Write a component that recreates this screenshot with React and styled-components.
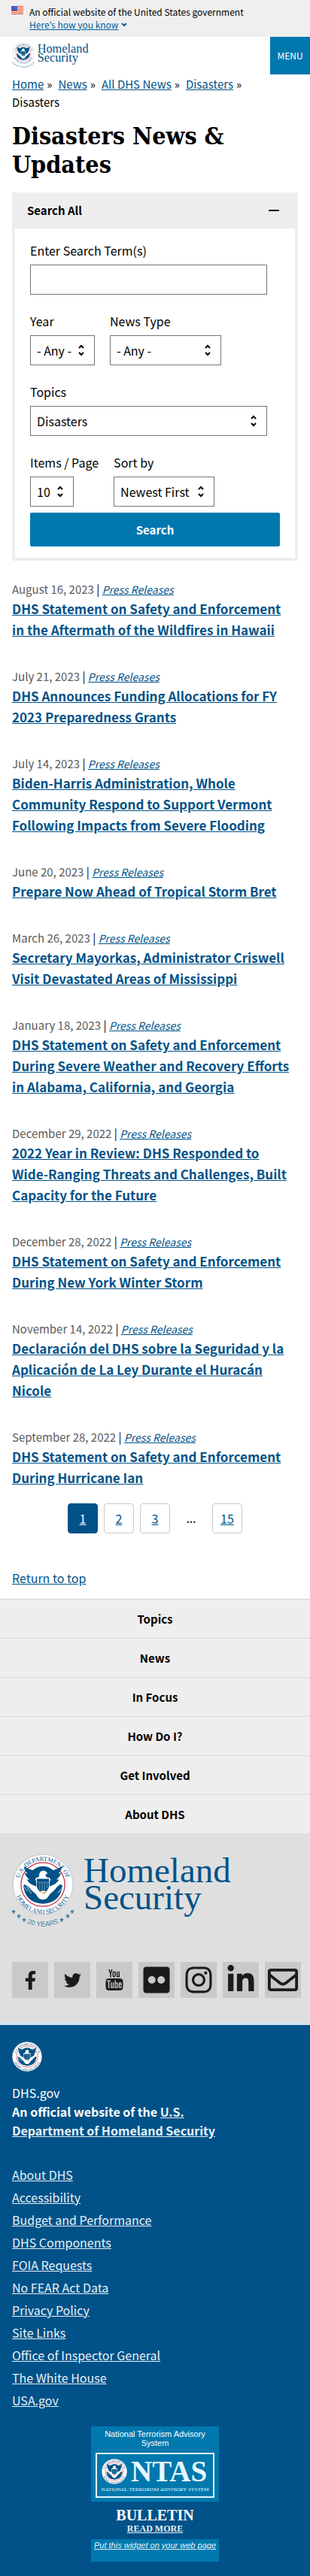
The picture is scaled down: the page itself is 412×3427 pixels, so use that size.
import React, { useId } from "react";
import styled, { createGlobalStyle } from "styled-components";
import {
  FaFacebookF,
  FaTwitter,
  FaFlickr,
  FaInstagram,
  FaLinkedinIn,
  FaRegEnvelope,
} from "react-icons/fa";
import { TfiYoutube } from "react-icons/tfi";

const sans = `"Noto Sans CJK KR", "Noto Sans", sans-serif`;
const serif = `"Liberation Serif", serif`;
const color = {
  blue: "#0078ae",
  navy: "#005288",
  link: "#005288",
  ink: "#000",
  muted: "#5a5b5d",
  pale: "#eee",
};

const GlobalStyle = createGlobalStyle`
  *, *::before, *::after { box-sizing: border-box; }
  body {
    margin: 0;
    background: #fff;
    color: ${color.ink};
    font-family: ${sans};
    font-size: 16px;
    line-height: 24px;
  }
  a { color: ${color.link}; }
  h1, h2, p, ul, ol { margin: 0; padding: 0; }
  ul, ol { list-style: none; }
  button, input, select { font: inherit; color: inherit; }
  svg { display: block; overflow: visible; }
`;

/* ---------- drawings ---------- */

function SealArt() {
  const id = useId();
  return (
    <g>
      <circle r="99" fill="#c9ccd4" />
      <circle r="96" fill="#fff" />
      <circle r="71" fill="#fff" stroke="#c8283c" strokeWidth="3" />
      <path d="M-63 4 Q-58 -4 -46 8 Q-36 22 -24 30 L-14 44 Q0 54 14 44 L24 30 Q38 20 46 8 Q58 -6 63 4 Q58 58 0 63 Q-58 58 -63 4Z" fill={color.navy} />
      <path d="M-36 -42 Q-24 -58 0 -59 Q24 -58 36 -42 L30 -22 L-30 -22Z" fill={color.navy} />
      <path d="M-62 -60 Q-44 -48 -30 -46 L-22 -20 L-22 6 Q-46 -2 -52 -16 L-44 -16 Q-56 -26 -59 -38 L-50 -35 Q-60 -46 -62 -60Z" fill={color.navy} />
      <path d="M62 -60 Q44 -48 30 -46 L22 -20 L22 6 Q46 -2 52 -16 L44 -16 Q56 -26 59 -38 L50 -35 Q60 -46 62 -60Z" fill={color.navy} />
      <path d="M-12 -26 Q-14 -44 2 -45 Q12 -44 15 -34 L8 -33 Q9 -28 12 -24 L24 -19 L24 -12 L-24 -12 L-24 -19Z" fill="#fff" />
      <path d="M-20 -18 H20 V6 Q16 22 0 28 Q-16 22 -20 6Z" fill={color.navy} />
      <path d="M-20 -7 H20 M-10 -5 V18 M-2 -5 V24 M6 -5 V22 M14 -5 V12" stroke="#7fa8c8" strokeWidth="2" fill="none" />
      <path d="M-60 8 L-50 22 M-54 2 L-38 30 M48 28 L60 14" stroke="#8fb5d0" strokeWidth="3" />
      <path d="M-26 14 L-12 24 L0 20 L14 24 L28 12 L20 30 L8 32 L14 44 Q0 54 -14 44 L-8 32 L-20 28Z" fill="#fff" />
      <path d="M-18 20 L0 26 L16 20 L4 32Z" fill="#d8b66a" />
      <path id={`${id}t`} d="M-77 20 A79 79 0 1 1 77 20" fill="none" />
      <path id={`${id}b`} d="M-91 -10 A92 92 0 1 0 91 -10" fill="none" />
      <g fill={color.navy} fontFamily="Liberation Serif, serif" fontSize="20" textAnchor="middle">
        <text><textPath href={`#${id}t`} startOffset="50%">U.S. DEPARTMENT OF</textPath></text>
        <text><textPath href={`#${id}b`} startOffset="50%">HOMELAND SECURITY</textPath></text>
      </g>
    </g>
  );
}

function Seal({ size }) {
  return (
    <svg width={size} height={size} viewBox="-100 -100 200 200" role="img" aria-label="Seal">
      <SealArt />
    </svg>
  );
}

const star = "M0 -3 L1 -1 L3 -1 L1 1 L2 3 L0 2 L-2 3 L-1 1 L-3 -1 L-1 -1Z";
const stars = [[2, 76], [9, 82], [16, 87], [80, 76], [74, 82], [66, 87]];

function Logo({ width, height }) {
  const id = useId();
  return (
    <svg width={width} height={height} viewBox="0 0 290 98" role="img" aria-label="Homeland Security">
      <g transform="translate(41 40) scale(.41)"><SealArt /></g>
      {stars.map(([x, y]) => (
        <path key={`${x}-${y}`} d={star} transform={`translate(${x} ${y})`} fill="#3f7f9f" />
      ))}
      <path id={id} d="M-12 52 A54 54 0 0 0 94 52" fill="none" />
      <text fontFamily="Liberation Sans, sans-serif" fontSize="9" fill="#3f7f9f" textAnchor="middle">
        <textPath href={`#${id}`} startOffset="50%">20 YEARS</textPath>
      </text>
      <g fontFamily="Liberation Serif, serif" fontSize="47" fill={color.navy}>
        <text x="95" y="37">Homeland</text>
        <text x="95" y="73">Security</text>
      </g>
    </svg>
  );
}

function Flag() {
  return (
    <svg width="16" height="11" viewBox="0 0 16 11" role="img" aria-label="U.S. flag">
      <rect width="16" height="11" fill="#fff" />
      {[0, 2, 4, 6, 8, 10].map((y) => (
        <rect key={y} y={y} width="16" height="1" fill="#db3e1f" />
      ))}
      <rect width="8" height="6" fill="#1e33b1" />
      {[1, 3, 5].map((y) => [1, 3, 5, 7].map((x) => (
        <rect key={`${x}${y}`} x={x - 0.5} y={y - 0.5} width="1" height="1" fill="#cfd6f5" />
      )))}
    </svg>
  );
}

/* ---------- banner and header ---------- */

const Banner = styled.section`
  display: flex;
  gap: 8px;
  padding: 8px 15px;
  background: #efefef;
  font-size: 12px;
  line-height: 16px;
`;
const BannerText = styled.div`
  display: flex;
  flex-direction: column;
  align-items: flex-start;
`;
const BannerToggle = styled.button`
  display: flex;
  align-items: center;
  gap: 4px;
  padding: 0;
  border: 0;
  background: none;
  color: #005ea2;
  line-height: 17px;
  span { text-decoration: underline; }
`;
const Header = styled.header`
  display: flex;
  justify-content: space-between;
  align-items: stretch;
  height: 50px;
  padding-left: 16px;
`;
const LogoLink = styled.a`
  padding-top: 8px;
`;
const MenuButton = styled.button`
  width: 53px;
  border: 0;
  padding: 0;
  background: ${color.blue};
  color: #fff;
  font-size: 12px;
`;

const Crumbs = styled.ol`
  display: flex;
  flex-wrap: wrap;
  padding: 1px 32px 0 16px;
  font-size: 15px;
  li:not(:last-child)::after {
    content: "»";
    margin: 0 8px 0 4px;
  }
`;
const Title = styled.h1`
  padding: 14px 16px 18px;
  font-family: "DejaVu Serif Condensed", "DejaVu Serif", serif;
  font-stretch: condensed;
  font-size: 32px;
  line-height: 38px;
  font-weight: 700;
`;

/* ---------- search panel ---------- */

const Panel = styled.section`
  margin: 0 16px 26px;
`;
const PanelToggle = styled.button`
  display: flex;
  justify-content: space-between;
  align-items: center;
  width: 100%;
  height: 48px;
  padding: 0 25px 0 20px;
  border: 0;
  background: ${color.pale};
  font-size: 15px;
  font-weight: 700;
`;
const Minus = styled.span`
  width: 14px;
  height: 2px;
  background: #000;
`;
const Form = styled.form`
  display: flex;
  flex-direction: column;
  gap: 23px;
  padding: 17px 20px 15px;
  border: 4px solid ${color.pale};
  border-top: 0;
`;
const FieldRow = styled.div`
  display: flex;
  gap: 20px;
`;
const Field = styled.div`
  display: flex;
  flex-direction: column;
  align-items: flex-start;
  gap: 7px;
  width: ${(p) => p.$width || "auto"};
`;
const Label = styled.label`
  white-space: nowrap;
`;
const TextInput = styled.input`
  width: 100%;
  height: 40px;
  padding: 0 8px;
  border: 1px solid #71767a;
`;
const SelectWrap = styled.div`
  position: relative;
  width: ${(p) => p.$width};
  svg {
    position: absolute;
    right: 14px;
    top: 12px;
    pointer-events: none;
  }
`;
const SelectBox = styled.select`
  appearance: none;
  width: 100%;
  height: 40px;
  padding: 0 8px;
  border: 1px solid #71767a;
  border-radius: 0;
  background: #fff;
`;
const Actions = styled.div`
  margin-top: -15px;
  display: flex;
`;
const SearchButton = styled.button`
  flex: 1;
  height: 45px;
  border: 0;
  border-radius: 2px;
  background: ${color.blue};
  color: #fff;
  font-size: 15px;
  font-weight: 700;
`;

function Select({ id, label, width, options, fieldWidth }) {
  return (
    <Field $width={fieldWidth}>
      <Label htmlFor={id}>{label}</Label>
      <SelectWrap $width={width}>
        <SelectBox id={id}>
          {options.map((o) => <option key={o}>{o}</option>)}
        </SelectBox>
        <svg width="8" height="16" viewBox="0 0 8 16" fill="none" stroke="#000" strokeWidth="2">
          <path d="M1 5 L4 2 L7 5 M1 11 L4 14 L7 11" />
        </svg>
      </SelectWrap>
    </Field>
  );
}

/* ---------- news list ---------- */

const NewsList = styled.ul`
  display: flex;
  flex-direction: column;
  gap: 36px;
  padding: 0 24px 0 16px;
`;
const Meta = styled.p`
  font-size: 15px;
  line-height: 24px;
  time { color: ${color.muted}; }
  a { font-size: 14px; font-style: italic; }
`;
const Headline = styled.h2`
  font-size: 17px;
  line-height: 28px;
  font-weight: 700;
`;

const news = [
  ["August 16, 2023", "DHS Statement on Safety and Enforcement in the Aftermath of the Wildfires in Hawaii"],
  ["July 21, 2023", "DHS Announces Funding Allocations for FY 2023 Preparedness Grants"],
  ["July 14, 2023", "Biden-Harris Administration, Whole Community Respond to Support Vermont Following Impacts from Severe Flooding"],
  ["June 20, 2023", "Prepare Now Ahead of Tropical Storm Bret"],
  ["March 26, 2023", "Secretary Mayorkas, Administrator Criswell Visit Devastated Areas of Mississippi"],
  ["January 18, 2023", "DHS Statement on Safety and Enforcement During Severe Weather and Recovery Efforts in Alabama, California, and Georgia"],
  ["December 29, 2022", "2022 Year in Review: DHS Responded to Wide-Ranging Threats and Challenges, Built Capacity for the Future"],
  ["December 28, 2022", "DHS Statement on Safety and Enforcement During New York Winter Storm"],
  ["November 14, 2022", "Declaración del DHS sobre la Seguridad y la Aplicación de La Ley Durante el Huracán Nicole"],
  ["September 28, 2022", "DHS Statement on Safety and Enforcement During Hurricane Ian"],
];

const Pager = styled.nav`
  display: flex;
  justify-content: center;
  gap: 8px;
  padding: 20px 16px 47px;
`;
const PageLink = styled.a`
  display: flex;
  align-items: center;
  justify-content: center;
  width: 40px;
  height: 40px;
  border: 1px solid ${(p) => (p.$current ? color.navy : "#c6cace")};
  border-radius: 4px;
  background: ${(p) => (p.$current ? color.navy : "#fff")};
  color: ${(p) => (p.$current ? "#fff" : color.link)};
`;
const PageGap = styled.span`
  width: 40px;
  font-family: "Noto Sans", sans-serif;
  line-height: 40px;
  text-align: center;
`;
const ReturnTop = styled.p`
  padding: 0 16px 16px;
`;

/* ---------- footer ---------- */

const FooterNav = styled.nav`
  background: ${color.pale};
`;
const FooterNavLink = styled.a`
  display: block;
  height: 52px;
  border-top: 1px solid #d8d8d8;
  color: #000;
  font-size: 15px;
  font-weight: 700;
  line-height: 51px;
  text-align: center;
  text-decoration: none;
`;
const Brand = styled.section`
  padding: 28px 12px 32px 16px;
  background: #dfdfdf;
  border-bottom: 4px solid #d5e5f0;
`;
const Social = styled.ul`
  display: flex;
  flex-wrap: wrap;
  gap: 8px;
  padding-top: 45px;
`;
const SocialLink = styled.a`
  display: flex;
  align-items: center;
  justify-content: center;
  width: 48px;
  height: 48px;
  background: #c9c9c9;
  color: #1b1b1b;
`;
const Identifier = styled.footer`
  padding: 22px 16px 19px;
  background: ${color.navy};
  color: #fff;
  a { color: #e6f1f8; }
`;
const Domain = styled.p`
  padding-top: 16px;
  line-height: 25px;
`;
const Official = styled.p`
  max-width: 290px;
  font-weight: 700;
  line-height: 25px;
`;
const Required = styled.ul`
  padding: 31px 0 20px;
  line-height: 30px;
`;

const Widget = styled.aside`
  width: 170px;
  margin: 0 auto;
  font-family: "Liberation Sans", sans-serif;
  font-size: 11px;
  line-height: 12px;
  text-align: center;
`;
const WidgetTop = styled.div`
  padding: 4px 6px 5px;
  background: ${color.blue};
`;
const NtasBox = styled.div`
  margin-top: 7px;
  border: 2px solid #e6f6ff;
`;
const Bulletin = styled.div`
  display: flex;
  flex-direction: column;
  align-items: center;
  padding-top: 6px;
  height: 50px;
  font-family: ${serif};
  font-weight: 700;
  strong { font-size: 20px; line-height: 24px; }
  a { font-size: 12px; line-height: 12px; }
`;
const WidgetBottom = styled.div`
  height: 30px;
  padding-top: 2px;
  background: ${color.blue};
  font-style: italic;
  white-space: nowrap;
`;

const socials = [
  ["Facebook", <FaFacebookF size={25} />],
  ["Twitter", <FaTwitter size={23} />],
  ["YouTube", <TfiYoutube size={28} />],
  ["Flickr", <FaFlickr size={40} />],
  ["Instagram", <FaInstagram size={40} />],
  ["LinkedIn", <FaLinkedinIn size={40} />],
  ["Email", <FaRegEnvelope size={40} />],
];

const requiredLinks = [
  "About DHS", "Accessibility", "Budget and Performance", "DHS Components",
  "FOIA Requests", "No FEAR Act Data", "Privacy Policy", "Site Links",
  "Office of Inspector General", "The White House", "USA.gov",
];

export default function App() {
  return (
    <>
      <GlobalStyle />
      <Banner>
        <Flag />
        <BannerText>
          <span>An official website of the United States government</span>
          <BannerToggle type="button">
            <span>Here’s how you know</span>
            <svg width="8" height="6" viewBox="0 0 8 6" fill="none" stroke="#005ea2" strokeWidth="2">
              <path d="M1 1 L4 4 L7 1" />
            </svg>
          </BannerToggle>
        </BannerText>
      </Banner>
      <Header>
        <LogoLink href="#home" aria-label="Home"><Logo width="102" height="34" /></LogoLink>
        <MenuButton type="button">MENU</MenuButton>
      </Header>

      <main>
        <nav aria-label="Breadcrumb">
          <Crumbs>
            {["Home", "News", "All DHS News", "Disasters"].map((c) => (
              <li key={c}><a href="#crumb">{c}</a></li>
            ))}
            <li>Disasters</li>
          </Crumbs>
        </nav>
        <Title>Disasters News &amp; Updates</Title>

        <Panel>
          <PanelToggle type="button" aria-expanded="true">
            Search All
            <Minus />
          </PanelToggle>
          <Form onSubmit={(e) => e.preventDefault()}>
            <Field $width="95%">
              <Label htmlFor="term">Enter Search Term(s)</Label>
              <TextInput id="term" type="text" />
            </Field>
            <FieldRow>
              <Select id="year" label="Year" width="86px" options={["- Any -"]} />
              <Select id="type" label="News Type" width="148px" options={["- Any -"]} />
            </FieldRow>
            <Select id="topics" label="Topics" width="100%" fieldWidth="95%" options={["Disasters"]} />
            <FieldRow>
              <Select id="items" label="Items / Page" width="58px" options={["10"]} />
              <Select id="sort" label="Sort by" width="134px" options={["Newest First"]} />
            </FieldRow>
            <Actions>
              <SearchButton type="submit">Search</SearchButton>
            </Actions>
          </Form>
        </Panel>

        <NewsList>
          {news.map(([date, title]) => (
            <li key={date}>
              <Meta>
                <time>{date}</time> | <a href="#press">Press Releases</a>
              </Meta>
              <Headline><a href="#story">{title}</a></Headline>
            </li>
          ))}
        </NewsList>

        <Pager aria-label="Pagination">
          <PageLink href="#p1" $current>1</PageLink>
          <PageLink href="#p2">2</PageLink>
          <PageLink href="#p3">3</PageLink>
          <PageGap>…</PageGap>
          <PageLink href="#p15">15</PageLink>
        </Pager>
        <ReturnTop><a href="#top">Return to top</a></ReturnTop>
      </main>

      <FooterNav>
        {["Topics", "News", "In Focus", "How Do I?", "Get Involved", "About DHS"].map((n) => (
          <FooterNavLink key={n} href="#section">{n}</FooterNavLink>
        ))}
      </FooterNav>
      <Brand>
        <Logo width="290" height="98" />
        <Social>
          {socials.map(([name, icon]) => (
            <li key={name}>
              <SocialLink href="#social" aria-label={name}>{icon}</SocialLink>
            </li>
          ))}
        </Social>
      </Brand>
      <Identifier>
        <Seal size="40" />
        <Domain>DHS.gov</Domain>
        <Official>
          An official website of the <a href="#dhs">U.S. Department of Homeland Security</a>
        </Official>
        <Required>
          {requiredLinks.map((l) => (
            <li key={l}><a href="#link">{l}</a></li>
          ))}
        </Required>
        <Widget>
          <WidgetTop>
            National Terrorism Advisory System
            <NtasBox>
              <svg width="100%" height="56" viewBox="0 0 154 56" role="img" aria-label="NTAS">
                <g transform="translate(23 23) scale(.17)"><SealArt /></g>
                <g fontFamily="Liberation Serif, serif" fill="#e6f6ff">
                  <text x="45" y="36" fontSize="39" fontWeight="700">NTAS</text>
                  <text x="77" y="49" fontSize="7" textAnchor="middle">NATIONAL TERRORISM ADVISORY SYSTEM</text>
                </g>
              </svg>
            </NtasBox>
          </WidgetTop>
          <Bulletin>
            <strong>BULLETIN</strong>
            <a href="#bulletin">READ MORE</a>
          </Bulletin>
          <WidgetBottom><a href="#widget">Put this widget on your web page</a></WidgetBottom>
        </Widget>
      </Identifier>
    </>
  );
}
